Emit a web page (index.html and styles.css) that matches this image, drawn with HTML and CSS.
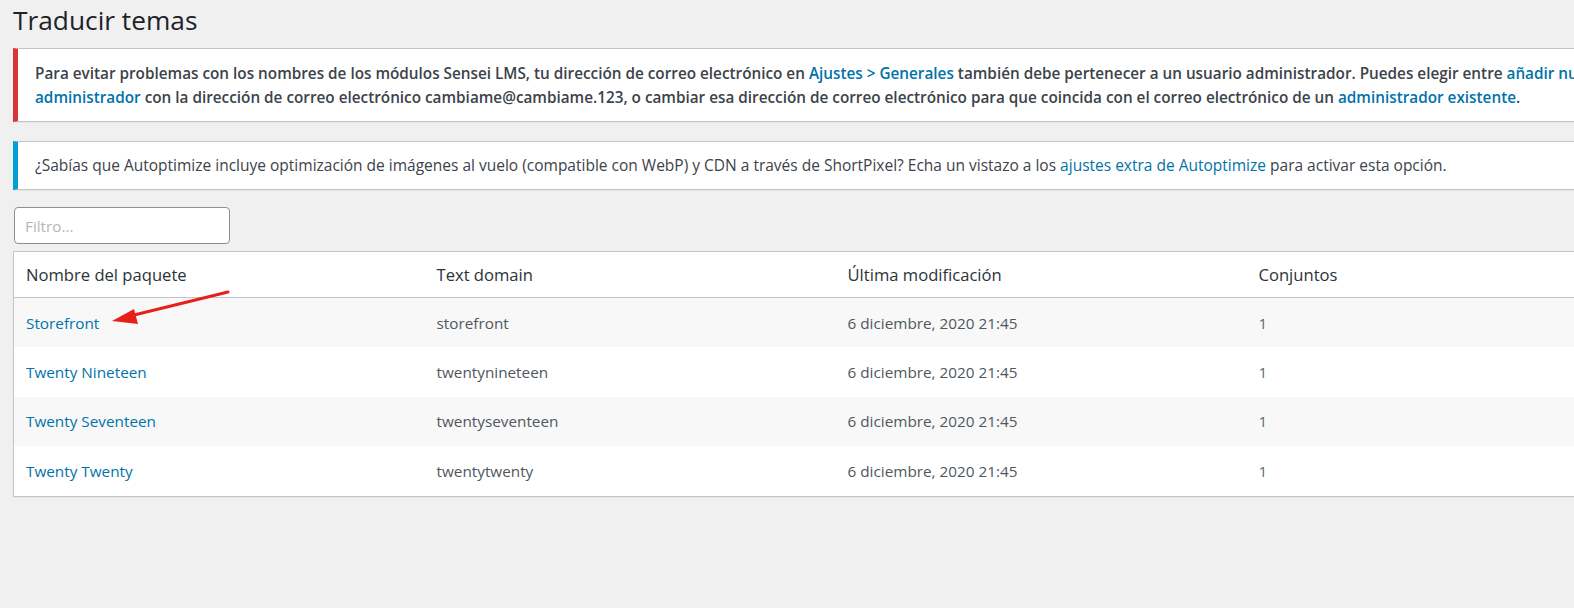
FILE: index.html
```html
<!DOCTYPE html>
<html lang="es">
<head>
<meta charset="utf-8">
<title>Traducir temas</title>
<link rel="stylesheet" href="styles.css">
</head>
<body>
<div class="wrap">
  <h1 class="title">Traducir temas</h1>

  <div class="notice notice-error">
    <p class="strong">Para evitar problemas con los nombres de los módulos Sensei LMS, tu dirección de correo electrónico en <a href="#">Ajustes &gt; Generales</a> también debe pertenecer a un usuario administrador. Puedes elegir entre <a href="#">añadir nuevo</a><br><a href="#">administrador</a> con la dirección de correo electrónico cambiame@cambiame.123, o cambiar esa dirección de correo electrónico para que coincida con el correo electrónico de un <a href="#">administrador existente</a>.</p>
  </div>

  <div class="notice notice-info">
    <p>¿Sabías que Autoptimize incluye optimización de imágenes al vuelo (compatible con WebP) y CDN a través de ShortPixel? Echa un vistazo a los <a href="#">ajustes extra de Autoptimize</a> para activar esta opción.</p>
  </div>

  <div class="filter">
    <input type="text" class="filter-input" placeholder="Filtro...">
  </div>

  <table class="packages">
    <thead>
      <tr>
        <th>Nombre del paquete</th>
        <th>Text domain</th>
        <th>Última modificación</th>
        <th>Conjuntos</th>
      </tr>
    </thead>
    <tbody>
      <tr class="alt">
        <td><a href="#">Storefront</a></td>
        <td>storefront</td>
        <td>6 diciembre, 2020 21:45</td>
        <td class="num">1</td>
      </tr>
      <tr>
        <td><a href="#">Twenty Nineteen</a></td>
        <td>twentynineteen</td>
        <td>6 diciembre, 2020 21:45</td>
        <td class="num">1</td>
      </tr>
      <tr class="alt">
        <td><a href="#">Twenty Seventeen</a></td>
        <td>twentyseventeen</td>
        <td>6 diciembre, 2020 21:45</td>
        <td class="num">1</td>
      </tr>
      <tr>
        <td><a href="#">Twenty Twenty</a></td>
        <td>twentytwenty</td>
        <td>6 diciembre, 2020 21:45</td>
        <td class="num">1</td>
      </tr>
    </tbody>
  </table>
</div>

<svg class="arrow" width="1574" height="608" viewBox="0 0 1574 608" aria-hidden="true">
  <line x1="228" y1="292" x2="130" y2="316" stroke="#e8201a" stroke-width="3" stroke-linecap="round"/>
  <polygon points="112,321 134,309 138,324" fill="#e8201a"/>
</svg>
</body>
</html>
```

FILE: styles.css
```css
html, body {
  margin: 0;
  padding: 0;
  background: #f0f0f1;
  overflow: hidden;
}

body {
  font-family: "Open Sans", "Noto Sans", "DejaVu Sans", sans-serif;
  color: #3c434a;
  font-size: 15px;
  position: relative;
  width: 1574px;
  height: 608px;
}

a {
  color: #0073aa;
  text-decoration: none;
}

.wrap {
  width: 1700px;
  padding-left: 13px;
}

.title {
  margin: 0;
  padding: 3px 0 0 0;
  height: 45px;
  font-size: 26.3px;
  font-weight: 400;
  line-height: 34px;
  color: #1d2327;
}

.notice {
  background: #fff;
  border: 1px solid #c3c4c7;
  border-left-width: 5px;
  box-shadow: 0 1px 1px rgba(0, 0, 0, .04);
  padding: 0 17px;
}

.notice p {
  margin: 0;
  line-height: 24px;
  white-space: nowrap;
  font-size: 15.5px;
}

.notice-error {
  border-left-color: #d63638;
  padding-top: 12px;
  padding-bottom: 12px;
}

.notice-error p.strong {
  font-weight: 600;
  font-size: 15.3px;
}

.notice-info {
  margin-top: 19px;
  border-left-color: #00a0d2;
  padding-top: 11px;
  padding-bottom: 12px;
}

.filter {
  margin-top: 17px;
  padding-left: 1px;
}

.filter-input {
  box-sizing: border-box;
  width: 216px;
  height: 37px;
  border: 1px solid #8c8f94;
  border-radius: 4px;
  background: #fff;
  padding: 0 10px;
  font-family: inherit;
  font-size: 15.3px;
  color: #2c3338;
  display: block;
}

.filter-input::placeholder {
  color: #b4b7ba;
}

.packages {
  margin-top: 7px;
  width: 1645px;
  border-collapse: collapse;
  border: 1px solid #c3c4c7;
  background: #fff;
  table-layout: fixed;
  box-shadow: 0 1px 1px rgba(0, 0, 0, .04);
}

.packages th {
  text-align: left;
  font-weight: 400;
  font-size: 16.6px;
  color: #2c3338;
  height: 45px;
  padding: 0 12px;
  border-bottom: 1px solid #c3c4c7;
}

.packages td {
  height: 49.4px;
  padding: 0 12px;
  color: #50575e;
  font-size: 15.3px;
}

.packages td.num {
  color: #646970;
}

.packages tr.alt td {
  background: #f8f8f8;
}

.arrow {
  position: absolute;
  left: 0;
  top: 0;
  pointer-events: none;
}
```
